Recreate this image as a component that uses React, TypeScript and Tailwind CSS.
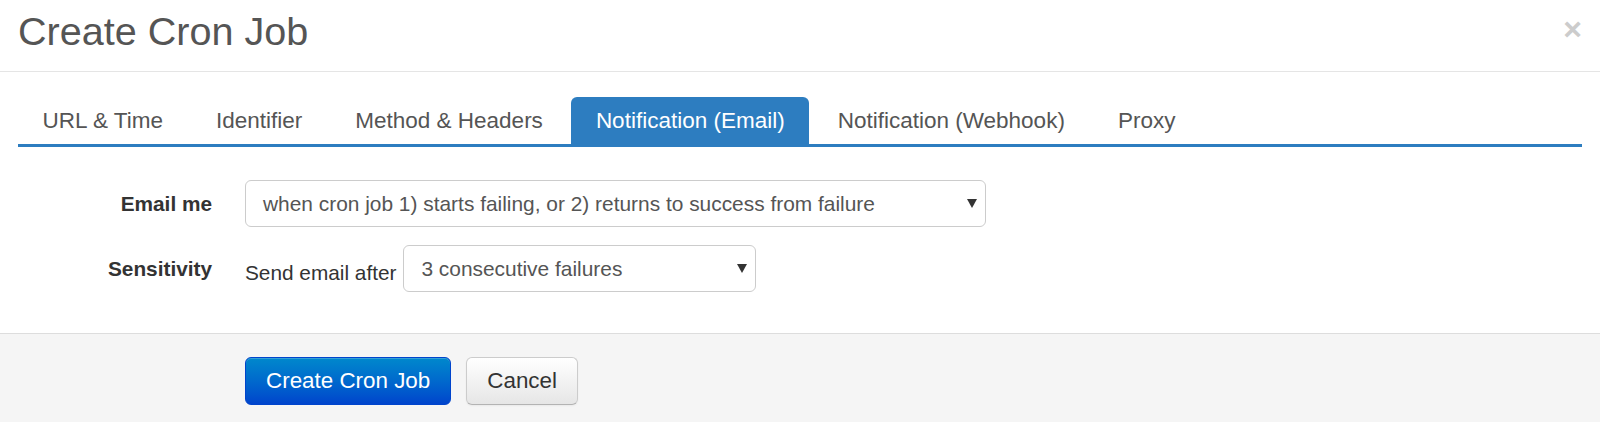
const tabs = [
  "URL & Time",
  "Identifier",
  "Method & Headers",
  "Notification (Email)",
  "Notification (Webhook)",
  "Proxy",
];

function Caret() {
  return (
    <svg width="10" height="9" viewBox="0 0 10 9" className="shrink-0">
      <path d="M0 0 L10 0 L5 9 Z" fill="#333" />
    </svg>
  );
}

function FakeSelect({ value, width }: { value: string; width: string }) {
  return (
    <div
      className={`${width} flex h-[47px] items-center justify-between rounded-[6px] border border-[#cccccc] bg-white pl-[17px] pr-[8px] text-[20.9px] text-[#555]`}
    >
      <span>{value}</span>
      <Caret />
    </div>
  );
}

export default function App() {
  return (
    <div className="h-[422px] w-full overflow-hidden bg-white font-['Liberation_Sans',Arial,sans-serif]">
      <header className="flex h-[72px] items-start justify-between border-b border-[#e5e5e5] pl-[18px] pr-[18px] pt-[12px]">
        <h3 className="text-[39.6px] leading-none text-[#555]">Create Cron Job</h3>
        <span className="pt-[1px] text-[32px] font-bold leading-none text-[#cccccc]">×</span>
      </header>

      <div className="px-[18px] pt-[25px]">
        <nav className="flex gap-[4px] border-b-[3px] border-[#2d7dc0]">
          {tabs.map((t) => {
            const active = t === "Notification (Email)";
            return (
              <div
                key={t}
                className={`flex h-[47px] items-center rounded-t-[6px] px-[24.5px] text-[22.5px] ${
                  active ? "bg-[#2d7dc0] text-white" : "text-[#555]"
                }`}
              >
                {t}
              </div>
            );
          })}
        </nav>

        <div className="flex flex-col gap-[18px] pb-[41px] pt-[33px]">
          <div className="flex items-center">
            <label className="w-[194px] text-right text-[20.8px] font-bold text-[#333]">
              Email me
            </label>
            <div className="ml-[33px]">
              <FakeSelect
                width="w-[741px]"
                value="when cron job 1) starts failing, or 2) returns to success from failure"
              />
            </div>
          </div>
          <div className="flex items-center">
            <label className="w-[194px] text-right text-[20.8px] font-bold text-[#333]">
              Sensitivity
            </label>
            <div className="ml-[33px] flex items-center gap-[7px]">
              <span className="pt-[8px] text-[20.8px] text-[#333]">Send email after</span>
              <FakeSelect width="w-[353px]" value="3 consecutive failures" />
            </div>
          </div>
        </div>
      </div>

      <footer className="flex h-[96px] gap-[15px] border-t border-[#dddddd] bg-[#f5f5f5] pl-[245px] pt-[23px]">
        <button className="h-[48px] rounded-[6px] border border-[#0044cc] bg-gradient-to-b from-[#0088cc] to-[#0044cc] px-[20px] text-[22.4px] text-white shadow-[inset_0_1px_0_rgba(255,255,255,0.2)]">
          Create Cron Job
        </button>
        <button className="h-[48px] rounded-[6px] border border-[#cccccc] border-b-[#b3b3b3] bg-gradient-to-b from-white to-[#e6e6e6] px-[20px] text-[22.4px] text-[#333] shadow-[0_1px_2px_rgba(0,0,0,0.05)]">
          Cancel
        </button>
      </footer>
    </div>
  );
}
